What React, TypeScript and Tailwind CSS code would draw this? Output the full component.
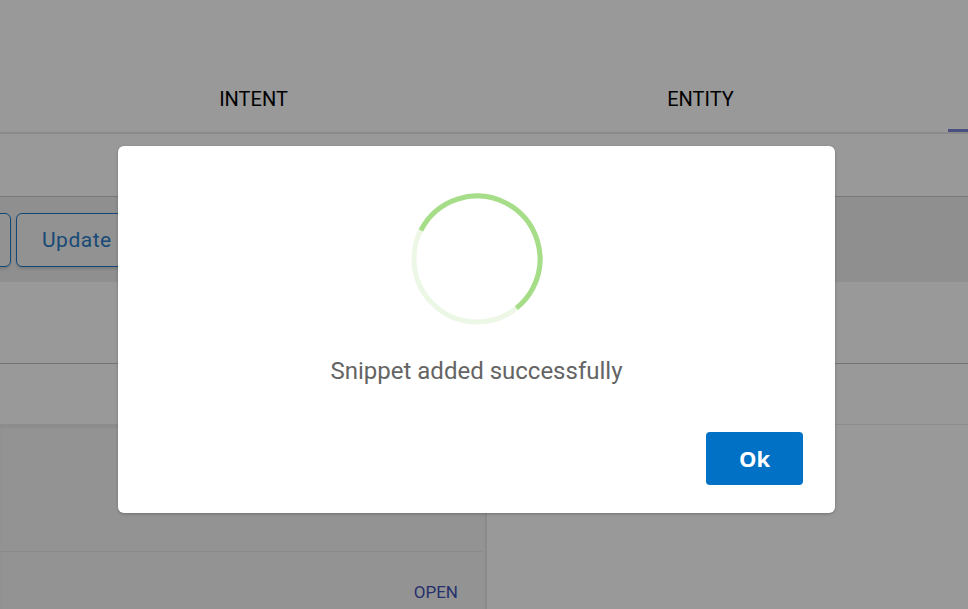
import React from "react";

const tabs = ["INTENT", "ENTITY", ""];

export default function App() {
  return (
    <div className="relative h-[609px] w-[968px] overflow-hidden bg-white font-['Roboto','Liberation_Sans',sans-serif]">
      <div className="h-[62px]" />

      <div className="relative flex h-[72px] border-b-2 border-[#e6e6e6] pl-[30px]">
        {tabs.map((tab, i) => (
          <div key={i} className="flex w-[447px] shrink-0 items-center justify-center pt-[3px] text-[20px] text-black">
            {tab}
          </div>
        ))}
        <span className="absolute left-[948px] top-[67px] h-[3px] w-[40px] bg-[#7c85d6]" />
      </div>

      <div className="h-[63px] border-b border-[#c9c9c9]" />

      <div className="flex h-[85px] items-center gap-[5px] bg-[#eeeeee]">
        <button className="ml-[-80px] h-[54px] w-[91px] rounded-[6px] border border-[#1f78c8] bg-[#f4f4f4] shadow-[0_2px_3px_rgba(0,0,0,0.15)]" />
        <button className="h-[54px] w-[160px] rounded-[6px] border border-[#1f78c8] bg-[#f4f4f4] pl-[25px] pt-[3px] text-left text-[21px] tracking-[0.5px] text-[#2a7cc6] shadow-[0_2px_3px_rgba(0,0,0,0.15)]">
          Update
        </button>
      </div>

      <div className="h-[82px] border-b border-[#c4c4c4]" />
      <div className="h-[61px] border-b border-[#ececec]" />

      <div className="flex">
        <div className="w-[487px] border-r-2 border-[#e8e8e8] bg-[#f6f6f6] shadow-[inset_0_3px_3px_rgba(0,0,0,0.05)]">
          <div className="mr-[3px] h-[127px] border-b border-[#e4e4e4]" />
          <div className="flex h-[80px] justify-end pr-[27px] pt-[28px] text-[17px] text-[#3f51b5]">OPEN</div>
        </div>
      </div>

      <div className="absolute inset-0 bg-black/40">
        <div className="ml-[118px] mt-[146px] flex h-[367px] w-[717px] flex-col items-center rounded-[6px] bg-white shadow-[0_1px_3px_rgba(0,0,0,0.25)]">
          <svg className="mt-[47px]" width="132" height="132" viewBox="0 0 132 132">
            <circle cx="66" cy="66" r="63" fill="none" stroke="#ecf7e6" strokeWidth="5" />
            <circle
              cx="66"
              cy="66"
              r="63"
              fill="none"
              stroke="#a6dd88"
              strokeWidth="5"
              strokeDasharray="224.3 400"
              transform="rotate(207 66 66)"
            />
          </svg>
          <div className="mt-[32px] text-[24px] leading-[29px] text-[#646464]">Snippet added successfully</div>
          <div className="mt-[46px] flex w-full justify-end pr-[32px]">
            <button className="h-[53px] w-[97px] rounded-[4px] bg-[#0071c5] font-['Open_Sans','Liberation_Sans',sans-serif] text-[22px] font-bold text-white">
              Ok
            </button>
          </div>
        </div>
      </div>
    </div>
  );
}
